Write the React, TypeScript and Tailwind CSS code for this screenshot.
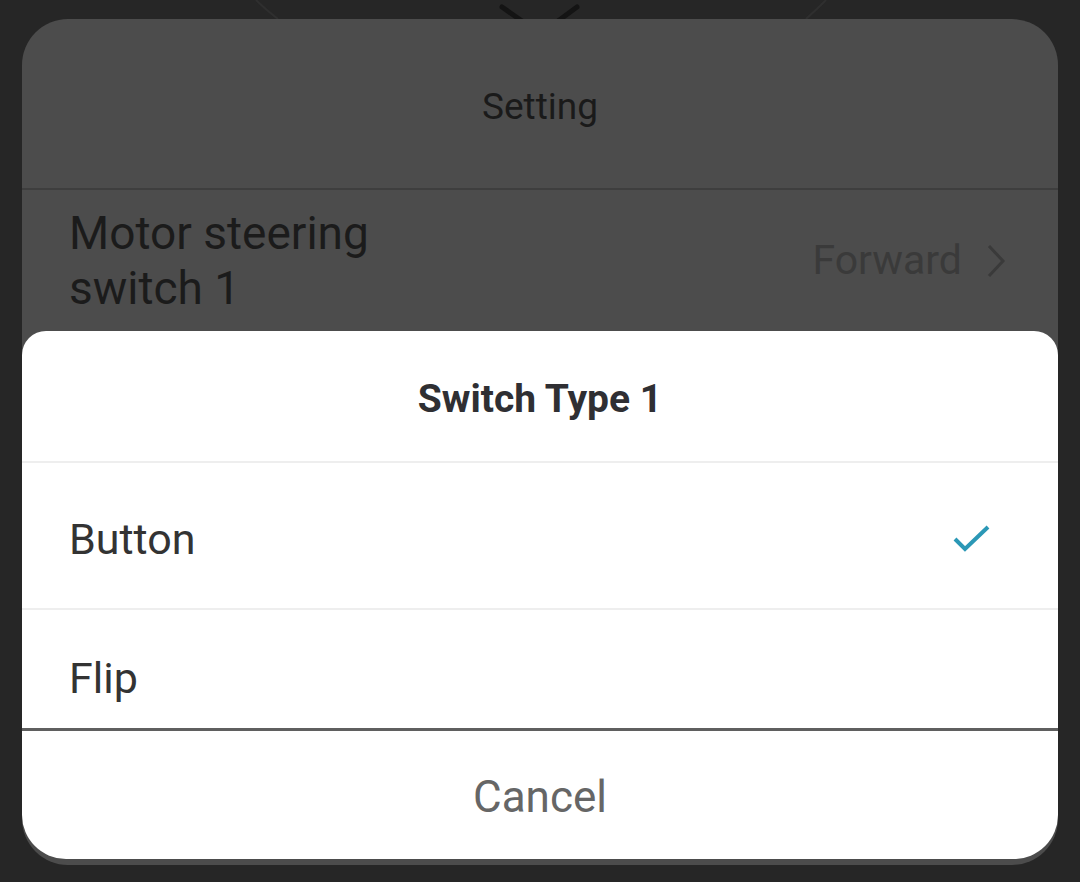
import React from "react";

const font = { fontFamily: "Roboto, 'Noto Sans', sans-serif" };

const TopStrip = () => (
  <svg width="1080" height="19" viewBox="0 0 1080 19" className="block">
    <path d="M256 0 Q266 10 278 19" stroke="#2f2f2f" strokeWidth="2" fill="none" />
    <path d="M826 0 Q816 10 806 19" stroke="#2f2f2f" strokeWidth="2" fill="none" />
    <path d="M502 7 L522 21" stroke="#141414" strokeWidth="5" strokeLinecap="round" />
    <path d="M577 7 L558 21" stroke="#141414" strokeWidth="5" strokeLinecap="round" />
  </svg>
);

const Check = () => (
  <svg width="40" height="30" viewBox="0 0 40 30">
    <polyline
      points="3,14 13,24 36,2"
      fill="none"
      stroke="#2b98b6"
      strokeWidth="4"
      strokeLinejoin="miter"
    />
  </svg>
);

export default function App() {
  return (
    <div className="w-[1080px] h-[882px] bg-[#262626] overflow-hidden" style={font}>
      <TopStrip />
      <div className="mx-[22px] h-[846px] rounded-[46px] bg-[#4c4c4c] overflow-hidden flex flex-col">
        <div className="h-[171px] flex items-center justify-center border-b-2 border-[#3e3e3e] pt-[7px]">
          <span className="text-[37px] text-[#1a1a1a]">Setting</span>
        </div>
        <div className="flex items-center justify-between pl-[47px] pr-[52px] pt-[16px]">
          <p className="text-[46px] leading-[55px] text-[#1b1b1b] w-[360px]">
            Motor steering switch 1
          </p>
          <div className="flex items-center gap-[24px] text-[#3a3a3a]">
            <span className="text-[41px]">Forward</span>
            <svg width="20" height="34" viewBox="0 0 20 34">
              <polyline points="3,2 17,17 3,32" fill="none" stroke="#3a3a3a" strokeWidth="3" />
            </svg>
          </div>
        </div>

        <div className="mt-auto mb-[6px] h-[528px] bg-white rounded-t-[24px] rounded-b-[44px] flex flex-col overflow-hidden">
          <div className="h-[132px] flex items-center justify-center border-b-2 border-[#eeeeee] pt-[6px]">
            <span className="text-[39px] font-bold text-[#2f2f33]">Switch Type 1</span>
          </div>
          <div className="h-[147px] flex items-center justify-between pl-[47px] pr-[66px] border-b-2 border-[#eeeeee] pt-[8px]">
            <span className="text-[43px] text-[#333333]">Button</span>
            <Check />
          </div>
          <div className="h-[118px] flex items-center pl-[47px] pt-[18px]">
            <span className="text-[43px] text-[#333333]">Flip</span>
          </div>
          <div className="flex-1 flex items-center justify-center border-t-[3px] border-[#5f5f5f] pt-[4px]">
            <span className="text-[44px] text-[#666666]">Cancel</span>
          </div>
        </div>
      </div>
    </div>
  );
}
